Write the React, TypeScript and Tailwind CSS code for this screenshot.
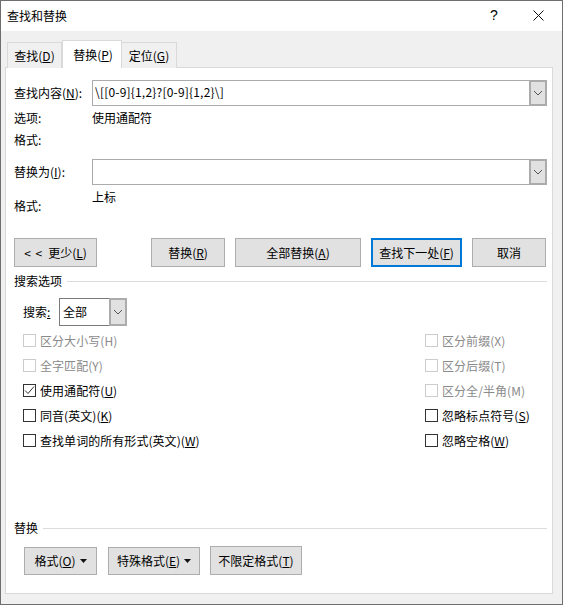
import React from "react";

const font = { fontFamily: '"Noto Sans CJK SC", "Liberation Sans", sans-serif' };

function Chevron() {
  return (
    <svg width="10" height="6" viewBox="0 0 10 6" fill="none" stroke="#555" strokeWidth="1">
      <path d="M1 1l4 4 4-4" />
    </svg>
  );
}

function Combo({ value }: { value: string }) {
  return (
    <div className="flex h-[26px] w-[455px] border border-[#ababab] bg-white">
      <div className="flex-1 pl-[2px] text-[12px] leading-[22px] tracking-[0.2px] text-black">{value}</div>
      <div className="flex w-[18px] items-center justify-center border-2 border-[#ababab] bg-[#e1e1e1] -my-px -mr-px">
        <Chevron />
      </div>
    </div>
  );
}

function Btn({ w, children, primary, h }: { w: string; children: React.ReactNode; primary?: boolean; h?: string }) {
  return (
    <div
      className={`flex items-center justify-center bg-[#e1e1e1] text-[12px] text-black ${h ?? "h-[29px]"} ${w} ${
        primary ? "border-2 border-[#0078d7]" : "border border-[#adadad]"
      }`}
    >
      {children}
    </div>
  );
}

function Check({ label, mn, disabled, checked }: { label: string; mn: string; disabled?: boolean; checked?: boolean }) {
  return (
    <div className={`flex h-[25px] items-center text-[12px] ${disabled ? "text-[#8a8a8a]" : "text-black"}`}>
      <div
        className={`mr-[4px] flex h-[13px] w-[13px] items-center justify-center border bg-white ${
          disabled ? "border-[#cccccc]" : "border-[#333333]"
        }`}
      >
        {checked && (
          <svg width="11" height="11" viewBox="0 0 11 11" fill="none" stroke="#333" strokeWidth="1">
            <path d="M1 5.5l3 3 6-7" />
          </svg>
        )}
      </div>
      <span className="tracking-[0.05px]">
        {label}({disabled ? mn : <u>{mn}</u>})
      </span>
    </div>
  );
}

function Caret() {
  return (
    <svg width="7" height="4" viewBox="0 0 7 4" className="ml-[4px]">
      <path d="M0 0h7L3.5 4z" fill="#111" />
    </svg>
  );
}

function Legend({ title }: { title: string }) {
  return (
    <div className="flex h-[14px] items-center text-[12px] text-black">
      <span>{title}</span>
      <div className="ml-[5px] h-px flex-1 bg-[#dcdcdc]" />
    </div>
  );
}

export default function App() {
  return (
    <div style={font} className="h-[606px] w-[563px] overflow-hidden bg-white">
      <div className="flex h-[605px] w-[563px] flex-col border border-[#6e6e6e] bg-[#f0f0f0]">
        {/* Title bar */}
        <div className="flex h-[30px] shrink-0 items-center bg-white pl-[6px]">
          <span className="flex-1 text-[12px] text-black">查找和替换</span>
          <span className="w-[43px] pb-[2px] text-[14px] text-black" style={{ fontFamily: '"Liberation Sans", sans-serif' }}>?</span>
          <div className="flex w-[29px] pb-[2px]">
            <svg width="11" height="11" viewBox="0 0 11 11" fill="none" stroke="#111" strokeWidth="1">
              <path d="M0.5 0.5l10 10M10.5 0.5l-10 10" />
            </svg>
          </div>
        </div>

        {/* Tabs */}
        <div className="z-10 -mb-px ml-[6px] mt-[9px] flex h-[28px] shrink-0 items-end text-[12px] text-black">
          <div className="flex h-[26px] w-[55px] items-center justify-center border border-b-0 border-[#d9d9d9] bg-[#f0f0f0] pt-[1px]">
            查找(<u>D</u>)
          </div>
          <div className="flex h-[28px] w-[60px] items-center justify-center border border-b-0 border-[#d9d9d9] bg-white pl-[2px]">
            替换(<u>P</u>)
          </div>
          <div className="flex h-[26px] w-[55px] items-center justify-center border border-b-0 border-l-0 border-[#d9d9d9] bg-[#f0f0f0] pt-[1px]">
            定位(<u>G</u>)
          </div>
        </div>

        {/* Panel */}
        <div className="ml-[4px] h-[527px] w-[548px] shrink-0 border border-[#d9d9d9] bg-white pl-[8px] pr-[5px] pt-[12px] text-[12px] text-black">
          <div className="flex">
            <div className="w-[78px] leading-[26px]">
              查找内容(<u>N</u>):
            </div>
            <Combo value="\[[0-9]{1,2}?[0-9]{1,2}\]" />
          </div>
          <div className="mt-[3px] flex h-[18px] items-center">
            <span className="w-[78px]">选项:</span>
            <span>使用通配符</span>
          </div>
          <div className="mt-[4px] h-[18px] leading-[18px]">格式:</div>
          <div className="mt-[10px] flex">
            <div className="w-[78px] leading-[26px]">
              替换为(<u>I</u>):
            </div>
            <Combo value="" />
          </div>
          <div className="mt-[3px] flex h-[24px]">
            <span className="w-[78px] pt-[6px] leading-[24px]">格式:</span>
            <span className="leading-[18px]">上标</span>
          </div>

          {/* Button row */}
          <div className="mt-[26px] flex">
            <Btn w="w-[83px]">
              <span className="mr-[5px] tracking-[1px]">&lt; &lt;</span>更少(<u>L</u>)
            </Btn>
            <div className="ml-[54px] flex gap-[10px]">
              <Btn w="w-[74px]">替换(<u>R</u>)</Btn>
              <Btn w="w-[126px]">全部替换(<u>A</u>)</Btn>
              <Btn w="w-[91px]" primary>查找下一处(<u>F</u>)</Btn>
              <Btn w="w-[74px]">取消</Btn>
            </div>
          </div>

          <div className="mt-[7px]">
            <Legend title="搜索选项" />
          </div>

          <div className="ml-[9px] mt-[10px] flex items-center">
            <span className="w-[36px]">
              搜索<u>:</u>
            </span>
            <div className="flex h-[28px] w-[68px] border border-[#7a7a7a] bg-white">
              <span className="flex-1 pl-[3px] leading-[26px]">全部</span>
              <div className="flex w-[18px] items-center justify-center border-2 border-[#ababab] bg-[#e1e1e1] -my-px -mr-px">
                <Chevron />
              </div>
            </div>
          </div>

          <div className="ml-[9px] mt-[2px] flex">
            <div className="w-[402px]">
              <Check label="区分大小写" mn="H" disabled />
              <Check label="全字匹配" mn="Y" disabled />
              <Check label="使用通配符" mn="U" checked />
              <Check label="同音(英文)" mn="K" />
              <Check label="查找单词的所有形式(英文)" mn="W" />
            </div>
            <div>
              <Check label="区分前缀" mn="X" disabled />
              <Check label="区分后缀" mn="T" disabled />
              <Check label="区分全/半角" mn="M" disabled />
              <Check label="忽略标点符号" mn="S" />
              <Check label="忽略空格" mn="W" />
            </div>
          </div>

          <div className="mt-[68px]">
            <Legend title="替换" />
          </div>

          <div className="ml-[10px] mt-[11px] flex items-end">
            <Btn w="w-[73px]" h="h-[28px]">
              格式(<u>O</u>)
              <Caret />
            </Btn>
            <div className="ml-[11px]">
              <Btn w="w-[92px]" h="h-[28px]">
                特殊格式(<u>E</u>)
                <Caret />
              </Btn>
            </div>
            <div className="ml-[10px]">
              <Btn w="w-[92px]">不限定格式(<u>T</u>)</Btn>
            </div>
          </div>
        </div>
      </div>
    </div>
  );
}
